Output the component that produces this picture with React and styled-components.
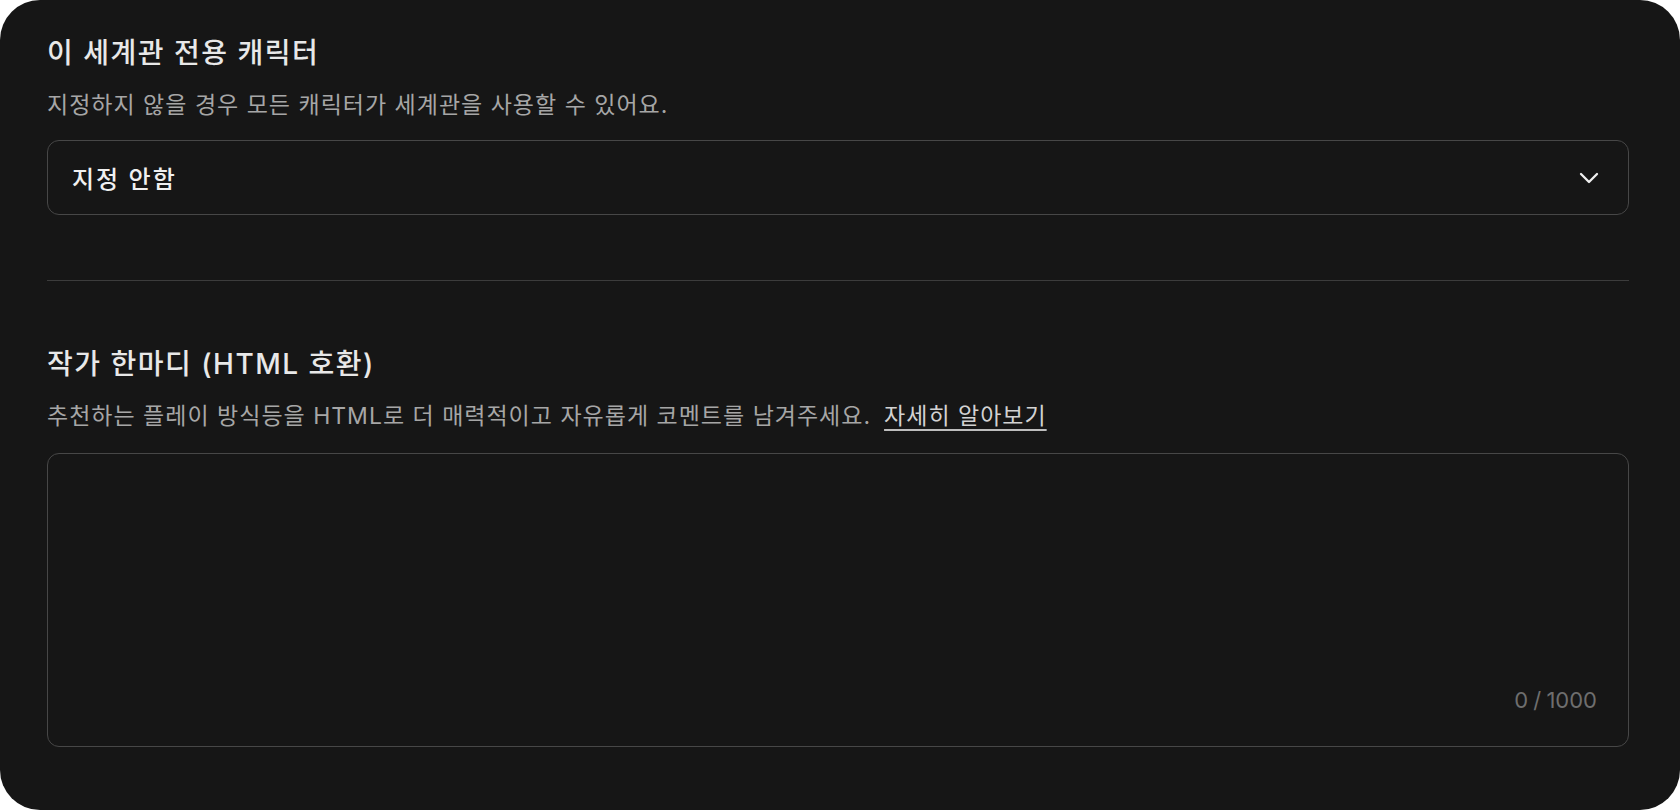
import React from "react";
import styled, { createGlobalStyle } from "styled-components";

const Global = createGlobalStyle`
  html, body { margin: 0; padding: 0; background: #ffffff; }
  * { box-sizing: border-box; }
  body { font-family: Inter, "Noto Sans CJK KR", sans-serif; }
`;

const Card = styled.div`
  width: 1680px;
  height: 810px;
  background: #161616;
  border-radius: 40px;
  padding: 35px 51px 63px 47px;
  display: flex;
  flex-direction: column;
  font-family: Inter, "Noto Sans CJK KR", sans-serif;
  overflow: hidden;
`;

const Section = styled.section`
  display: flex;
  flex-direction: column;
  flex: ${(p) => (p.$grow ? "1" : "none")};
  min-height: 0;
`;

const Title = styled.h2`
  margin: 0;
  font-size: 28px;
  line-height: 36px;
  font-weight: 500;
  color: #e8e8e8;
  letter-spacing: 1.5px;
`;

const Hint = styled.p`
  margin: 19px 0 20px;
  font-size: 23px;
  line-height: 30px;
  font-weight: 400;
  color: #a6a6a6;
  letter-spacing: 1px;
  white-space: nowrap;
`;

const Link = styled.a`
  margin-left: 13px;
  color: #d2d2d2;
  text-decoration: underline;
  text-decoration-color: #bdbdbd;
  text-underline-offset: 5px;
  cursor: pointer;
`;

const Select = styled.button`
  height: 75px;
  width: 100%;
  display: flex;
  align-items: center;
  justify-content: space-between;
  padding: 0 29px 0 24px;
  background: transparent;
  border: 1px solid #474747;
  border-radius: 12px;
  font-family: inherit;
  font-size: 24px;
  font-weight: 500;
  letter-spacing: 2px;
  color: #f0f0f0;
  cursor: pointer;
`;

const Divider = styled.hr`
  margin: 65px 0 65px;
  border: none;
  height: 1px;
  background: #3c3c3c;
`;

const EditorBox = styled.div`
  flex: 1;
  display: flex;
  flex-direction: column;
  border: 1px solid #474747;
  border-radius: 12px;
  padding: 22px 31px 34px 24px;
  margin-top: 2px;
`;

const TextArea = styled.textarea`
  flex: 1;
  resize: none;
  border: none;
  outline: none;
  background: transparent;
  color: #ececec;
  font-family: inherit;
  font-size: 22px;
`;

const Counter = styled.div`
  align-self: flex-end;
  font-size: 22px;
  line-height: 24px;
  word-spacing: -1px;
  color: #6e6e6e;
`;

const Chevron = () => (
  <svg width="20" height="12" viewBox="0 0 20 12" fill="none">
    <path
      d="M2 2 L10 10 L18 2"
      stroke="#f0f0f0"
      strokeWidth="2.3"
      strokeLinecap="round"
      strokeLinejoin="round"
    />
  </svg>
);

export default function App() {
  return (
    <>
      <Global />
      <Card>
        <Section>
          <Title>이 세계관 전용 캐릭터</Title>
          <Hint>지정하지 않을 경우 모든 캐릭터가 세계관을 사용할 수 있어요.</Hint>
          <Select type="button">
            <span>지정 안함</span>
            <Chevron />
          </Select>
        </Section>
        <Divider />
        <Section $grow>
          <Title>작가 한마디 (HTML 호환)</Title>
          <Hint>
            추천하는 플레이 방식등을 HTML로 더 매력적이고 자유롭게 코멘트를 남겨주세요.
            <Link>자세히 알아보기</Link>
          </Hint>
          <EditorBox>
            <TextArea />
            <Counter>0 / 1000</Counter>
          </EditorBox>
        </Section>
      </Card>
    </>
  );
}
